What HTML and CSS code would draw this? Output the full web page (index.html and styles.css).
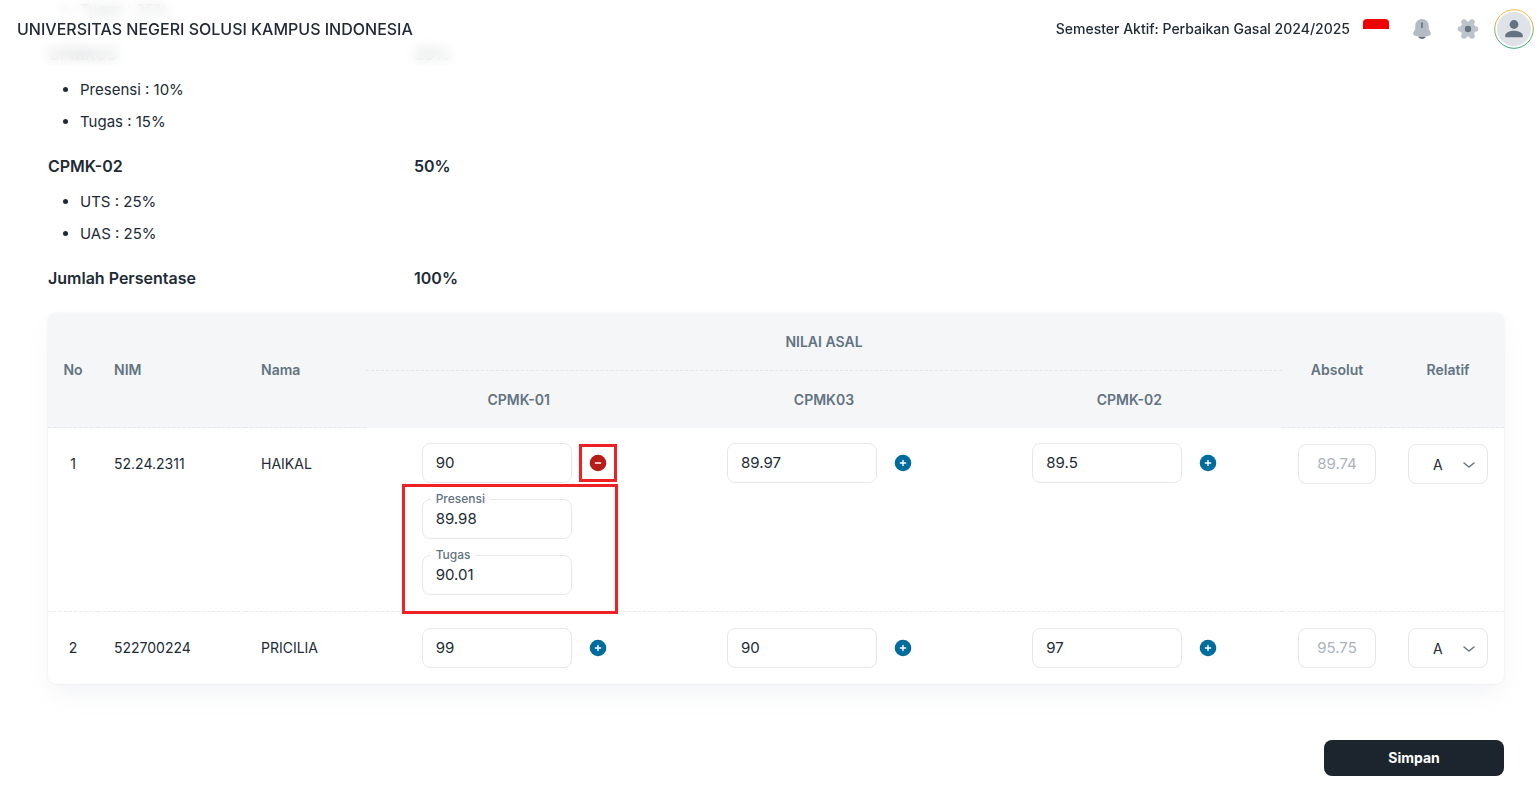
FILE: index.html
```html
<!DOCTYPE html>
<html lang="id">
<head>
<meta charset="utf-8">
<meta name="viewport" content="width=device-width, initial-scale=1">
<title>Input Nilai</title>
<link rel="stylesheet" href="styles.css">
</head>
<body>
<svg class="sprite" aria-hidden="true">
  <symbol id="plus" viewBox="0 0 20 20"><circle cx="10" cy="10" r="8.3" fill="currentColor"/><path d="M10 7.400v5.200M7.400 10h5.200" stroke="#fff" stroke-width="1.400" stroke-linecap="round"/></symbol>
  <symbol id="minus" viewBox="0 0 20 20"><circle cx="10" cy="10" r="8.3" fill="currentColor"/><path d="M7.600 10h4.800" stroke="#fff" stroke-width="1.700" stroke-linecap="round"/></symbol>
  <symbol id="chevron" viewBox="0 0 14 14"><path d="M2 5l5 4 5-4" fill="none" stroke="#637381" stroke-width="1.500" stroke-linecap="round" stroke-linejoin="round"/></symbol>
</svg>

<header class="topbar">
  <h1 class="topbar-title">UNIVERSITAS NEGERI SOLUSI KAMPUS INDONESIA</h1>
  <p class="semester">Semester Aktif: Perbaikan Gasal 2024/2025</p>
  <div class="actions">
    <button class="icon-btn" type="button" aria-label="Bahasa Indonesia"><span class="flag"></span></button>
    <button class="icon-btn" type="button" aria-label="Notifikasi">
      <svg width="24" height="24" viewBox="0 0 24 24"><path d="M8 19.500h8c-.6 1.500-2.100 2.500-4 2.500s-3.400-1-4-2.500z" fill="#637381"/><path d="M12 2C8.100 2 5.300 5 5.300 8.700v2.500c0 .9-.3 1.500-.8 2.300l-.9 1.400c-1 1.700-.4 3.300 1.500 3.900 4.500 1.300 9.300 1.300 13.800 0 1.900-.6 2.500-2.200 1.500-3.900l-.9-1.400c-.5-.8-.8-1.400-.8-2.300V8.700C18.700 5 15.900 2 12 2z" fill="#b4bbc2"/><path d="M12 6v4.200" stroke="#637381" stroke-width="1.700" stroke-linecap="round"/></svg>
    </button>
    <button class="icon-btn" type="button" aria-label="Pengaturan">
      <svg width="24" height="24" viewBox="0 0 24 24"><g fill="#bcc3ca"><circle cx="12" cy="12" r="7.700"/><circle cx="8" cy="5" r="2.800"/><circle cx="16" cy="5" r="2.800"/><circle cx="19.500" cy="12" r="2.800"/><circle cx="16" cy="19" r="2.800"/><circle cx="8" cy="19" r="2.800"/><circle cx="4.500" cy="12" r="2.800"/></g><circle cx="12" cy="12" r="3.200" fill="#637381"/></svg>
    </button>
    <button class="icon-btn" type="button" aria-label="Akun">
      <svg width="40" height="40" viewBox="0 0 40 40"><defs><linearGradient id="ring" x1="0" y1="0" x2="0" y2="1"><stop offset=".1" stop-color="#ffb83d"/><stop offset=".9" stop-color="#32a878"/></linearGradient></defs><circle cx="20" cy="20" r="19.300" fill="#fff" stroke="url(#ring)"/><circle cx="20" cy="20" r="17" fill="#dfe3e8"/><circle cx="20" cy="15.500" r="4.400" fill="#637381"/><path d="M11.200 28.300v-1.600c0-3.100 5-4.900 8.800-4.900s8.800 1.800 8.800 4.900v1.600z" fill="#637381"/></svg>
    </button>
  </div>
</header>

<main class="page">
  <section class="weights">
    <ul class="parts"><li>Tugas : 25%</li></ul>
    <h2 class="weight"><span>CPMK03</span><span>25%</span></h2>
    <ul class="parts"><li>Presensi : 10%</li><li>Tugas : 15%</li></ul>
    <h2 class="weight"><span>CPMK-02</span><span>50%</span></h2>
    <ul class="parts"><li>UTS : 25%</li><li>UAS : 25%</li></ul>
    <h2 class="weight"><span>Jumlah Persentase</span><span>100%</span></h2>
  </section>

  <form class="grades">
    <div class="card">
      <table class="table">
        <colgroup><col class="c-no"><col class="c-nim"><col class="c-nama"><col><col><col><col class="c-abs"><col class="c-rel"></colgroup>
        <thead>
          <tr><th rowspan="2" class="center">No</th><th rowspan="2">NIM</th><th rowspan="2">Nama</th><th colspan="3" class="center">NILAI ASAL</th><th rowspan="2" class="center">Absolut</th><th rowspan="2" class="center">Relatif</th></tr>
          <tr class="sub"><th class="center">CPMK-01</th><th class="center">CPMK03</th><th class="center">CPMK-02</th></tr>
        </thead>
        <tbody>
          <tr class="expanded">
            <td class="center">1</td><td>52.24.2311</td><td>HAIKAL</td>
            <td class="score-cell">
              <div class="score">
                <input class="field" aria-label="CPMK-01 HAIKAL" value="90">
                <button class="toggle open marked" type="button" aria-label="Tutup rincian"><svg><use href="#minus"/></svg></button>
                <div class="details">
                  <div class="labeled"><input class="field" id="presensi" value="89.98"><label for="presensi">Presensi</label></div>
                  <div class="labeled"><input class="field" id="tugas" value="90.01"><label for="tugas">Tugas</label></div>
                </div>
              </div>
            </td>
            <td class="score-cell"><div class="score"><input class="field" aria-label="CPMK03 HAIKAL" value="89.97"><button class="toggle" type="button" aria-label="Buka rincian"><svg><use href="#plus"/></svg></button></div></td>
            <td class="score-cell"><div class="score"><input class="field" aria-label="CPMK-02 HAIKAL" value="89.5"><button class="toggle" type="button" aria-label="Buka rincian"><svg><use href="#plus"/></svg></button></div></td>
            <td><input class="field absolute-score" aria-label="Absolut HAIKAL" value="89.74" disabled></td>
            <td><div class="choice"><select class="field" aria-label="Relatif HAIKAL"><option>A</option><option>B</option></select><svg><use href="#chevron"/></svg></div></td>
          </tr>
          <tr>
            <td class="center">2</td><td>522700224</td><td>PRICILIA</td>
            <td><div class="score"><input class="field" aria-label="CPMK-01 PRICILIA" value="99"><button class="toggle" type="button" aria-label="Buka rincian"><svg><use href="#plus"/></svg></button></div></td>
            <td><div class="score"><input class="field" aria-label="CPMK03 PRICILIA" value="90"><button class="toggle" type="button" aria-label="Buka rincian"><svg><use href="#plus"/></svg></button></div></td>
            <td><div class="score"><input class="field" aria-label="CPMK-02 PRICILIA" value="97"><button class="toggle" type="button" aria-label="Buka rincian"><svg><use href="#plus"/></svg></button></div></td>
            <td><input class="field absolute-score" aria-label="Absolut PRICILIA" value="95.75" disabled></td>
            <td><div class="choice"><select class="field" aria-label="Relatif PRICILIA"><option>A</option><option>B</option></select><svg><use href="#chevron"/></svg></div></td>
          </tr>
        </tbody>
      </table>
    </div>
    <button class="save" type="submit">Simpan</button>
  </form>
</main>
</body>
</html>
```
FILE: styles.css
```css
* { box-sizing: border-box; }
body {
  margin: 0;
  overflow-x: hidden;
  background: #fff;
  color: #212b36;
  font: 400 15px/24px Inter, "Liberation Sans", sans-serif;
}
h1, h2, p, ul { margin: 0; }
button, input, select { font: inherit; color: inherit; }
button { padding: 0; border: 0; background: none; cursor: pointer; }
svg { display: block; }
.sprite { position: absolute; width: 0; height: 0; }

.topbar {
  position: fixed;
  inset: 0 0 auto;
  z-index: 2;
  display: flex;
  align-items: center;
  height: 65px;
  padding: 0 6px 8px 17px;
  background: rgba(255, 255, 255, .8);
  backdrop-filter: blur(6px);
}
.topbar-title { flex: 1; font-size: 16px; font-weight: 500; }
.semester { font-size: 14px; font-weight: 500; }
.actions { display: flex; align-items: center; gap: 6px; margin-left: 6px; }
.icon-btn { display: flex; justify-content: center; width: 40px; }
.flag { width: 26px; height: 20px; border-radius: 4px; background: linear-gradient(#f00000 50%, #fff 50%); }

.page { display: flow-root; padding: 0 36px 32px 48px; }
.weights { margin-top: -6px; }
.parts { padding-left: 32px; font-size: 15px; line-height: 32px; }
.weight {
  display: grid;
  grid-template-columns: repeat(4, 1fr);
  gap: 8px;
  margin: 16px 0 8px;
  font-size: 16px;
  font-weight: 600;
}

.grades { display: flex; flex-direction: column; }
.card {
  margin-top: 15px;
  overflow: hidden;
  border-radius: 8px;
  background: #fff;
  box-shadow: 0 0 2px rgba(145, 158, 171, .2), 0 12px 24px -4px rgba(145, 158, 171, .12);
}
.table { width: 100%; table-layout: fixed; border-collapse: separate; border-spacing: 0; font-size: 14px; }
.c-no { width: 50px; }
.c-nim { width: 147px; }
.c-nama { width: 121px; }
.c-abs { width: 110px; }
.c-rel { width: 112px; }
th {
  height: 58px;
  padding: 0 16px;
  border-bottom: 1px dashed #e3e7ea;
  background: #f4f6f8;
  color: #637381;
  font-weight: 600;
  text-align: left;
}
.sub th { height: 57px; border-bottom: 0; }
td { padding: 16px; vertical-align: top; line-height: 40px; }
.expanded td { padding-bottom: 16px; border-bottom: 1px dashed #e8ebee; }
.expanded .score-cell { padding-top: 15px; }
.center { padding-inline: 0; text-align: center; }

.field {
  display: block;
  width: 150px;
  height: 40px;
  padding: 0 13px;
  border: 1px solid #e5e8eb;
  border-radius: 8px;
  outline: 0;
  background: #fff;
  font-size: 15px;
}
.score {
  display: grid;
  grid-template-columns: 150px 36px;
  column-gap: 8px;
  justify-content: center;
  align-items: center;
}
.toggle { display: flex; align-items: center; justify-content: center; height: 36px; color: #006c9c; }
.toggle svg { width: 20px; height: 20px; }
.open { color: #b71d18; }
.marked { outline: 3px solid #ee2224; outline-offset: -2px; }
.details { position: relative; display: grid; gap: 16px; padding-top: 16px; }
.details::after {
  content: "";
  position: absolute;
  inset: 1px -46px -19px -20px;
  border: 3px solid #ee2224;
  pointer-events: none;
}
.labeled { position: relative; }
.labeled label {
  position: absolute;
  top: -8px;
  left: 9px;
  padding: 0 5px;
  background: #fff;
  color: #637381;
  font-size: 12px;
  font-weight: 500;
  line-height: 16px;
}
.absolute-score { width: 100%; padding: 0; color: #a9b3bd; text-align: center; }
.choice { position: relative; }
.choice select { width: 100%; padding: 0 24px; appearance: none; font-size: 14px; }
.choice svg { position: absolute; top: 14px; right: 12px; width: 14px; height: 14px; pointer-events: none; }

.save {
  align-self: flex-end;
  width: 180px;
  height: 36px;
  margin-top: 56px;
  border-radius: 8px;
  background: #1c252e;
  color: #fff;
  font-size: 14px;
  font-weight: 700;
}
```
